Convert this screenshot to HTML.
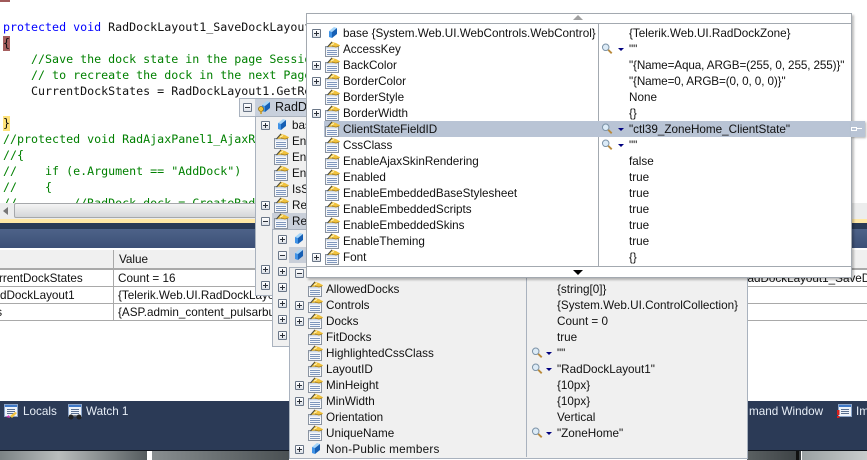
<!DOCTYPE html>
<html><head><meta charset="utf-8"><style>
html,body{margin:0;padding:0}
body{width:867px;height:460px;overflow:hidden;position:relative;background:#fff;font:11.7px "Liberation Sans",sans-serif;color:#111}
div,span,svg{position:absolute}
.c{font:11.65px/16px "DejaVu Sans Mono","Liberation Mono",monospace;white-space:pre;left:3px;color:#111}
.g{color:#008000}.b{color:#0000ff}
.t{white-space:nowrap;height:16px;line-height:16px;margin-top:1px}
.i{width:16px;height:16px;overflow:visible}
.e{width:7px;height:7px;margin:1px;border:1px solid #6a7687;background:linear-gradient(#fff,#dde1e7);border-radius:1px}
.e:before{content:"";position:absolute;left:1px;top:3px;width:5px;height:1px;background:#2a2f38}
.p:after{content:"";position:absolute;left:3px;top:1px;width:1px;height:5px;background:#2a2f38}
</style></head><body>
<svg width="0" height="0" style="position:absolute"><defs>
<symbol id="p" viewBox="0 0 16 16"><path d="M1.500 5.500h13v10h-13z" fill="#f6f8fb" stroke="#8a93a0"/><path d="M2 6h12v1.500H2z" fill="#cfd9e8"/><path d="M3 9.500h10M3 11.500h10M3 13.500h10" stroke="#7f97bd"/><path d="M4 6 L8 1 L12 2 L16.500 4.500 L12 6.500 L8 5.500z" fill="#f0c23e"/><path d="M3.500 6 L8 .8" stroke="#4b4a3c" stroke-width="1.100" fill="none"/><path d="M8 5 L12 6 L15 5" stroke="#a87f1c" stroke-width=".8" fill="none"/><path d="M7 4 L10 2.500" stroke="#fff3b8" fill="none"/></symbol>
<symbol id="m" viewBox="0 0 16 16"><path d="M2 6 L7 2 L10 3 L5 7z" fill="#a6d6fa"/><path d="M2 6 L5 7 V13 L2 12z" fill="#3f92e6"/><path d="M5 7 L10 3 V9 L5 13z" fill="#165fb4"/></symbol>
<symbol id="l" viewBox="0 0 14 14"><circle cx="5.500" cy="5" r="3.800" fill="#dcebf7" stroke="#7e94a8" stroke-width="1.200"/><path d="M8.500 8 L12.500 12" stroke="#b98a3a" stroke-width="2.200"/></symbol>
<symbol id="w" viewBox="0 0 16 16"><path d="M1.500 1.500h13v12h-13z" fill="#eef3fa" stroke="#8aa3c8"/><path d="M2 2h12v2H2z" fill="#3e78c8"/><path d="M4 6.500h8M4 8.500h8M4 10.500h8" stroke="#5a6f90"/></symbol>
</defs></svg>

<div style="left:0;top:0;width:10px;height:2px;background:#a05a5a"></div>
<div style="left:3px;top:36px;width:7px;height:15px;background:#a65f5f"></div>
<div style="left:3px;top:116px;width:7px;height:15px;background:#ffe27a"></div>
<div class="c" style="top:19px"><span style="position:static" class="b">protected void</span> RadDockLayout1_SaveDockLayout</div>
<div class="c" style="top:35px">{</div>
<div class="c g" style="top:51px">    //Save the dock state in the page Session</div>
<div class="c g" style="top:67px">    // to recreate the dock in the next Page</div>
<div class="c" style="top:83px">    CurrentDockStates = RadDockLayout1.GetRegistered</div>
<div class="c" style="top:115px">}</div>
<div class="c g" style="top:131px">//protected void RadAjaxPanel1_AjaxRequest</div>
<div class="c g" style="top:147px">//{</div>
<div class="c g" style="top:163px">//    if (e.Argument == "AddDock")</div>
<div class="c g" style="top:179px">//    {</div>
<div style="left:0;top:195px;width:867px;height:8px;overflow:hidden"><div class="c g" style="top:0">//        //RadDock dock = CreateRadDock</div></div>

<div style="left:0;top:203px;width:867px;height:16px;background:#eceded"></div>
<div style="left:14px;top:203px;width:260px;height:13px;background:linear-gradient(#f4f4f4,#d4d6d8);border:1px solid #a6a8ab;border-radius:2px"></div>
<div style="left:3px;top:207px;width:0;height:0;border:4px solid transparent;border-right:5px solid #777;border-left:0"></div>
<div style="left:0;top:219px;width:867px;height:4px;background:#ffe8a6"></div>
<div style="left:0;top:223px;width:867px;height:6px;background:#293a56"></div>
<div style="left:0;top:229px;width:867px;height:19px;background:linear-gradient(#4d6288,#3c5077)"></div>
<div style="left:0;top:248px;width:867px;height:153px;background:#fff"></div>

<div style="left:0;top:250px;width:867px;height:18px;background:#f0f0f0"></div>
<div style="left:0;top:268px;width:867px;height:2px;background:#a9a9a9"></div>
<div style="left:0;top:286px;width:867px;height:1px;background:#a9a9a9"></div>
<div style="left:0;top:303px;width:867px;height:1px;background:#a9a9a9"></div>
<div style="left:0;top:320px;width:867px;height:1px;background:#a9a9a9"></div>
<div style="left:113px;top:250px;width:1px;height:70px;background:#a9a9a9"></div>
<div class="t" style="left:119px;top:251px">Value</div>
<div class="t" style="left:-16px;top:270px">CurrentDockStates</div>
<div class="t" style="left:118px;top:270px">Count = 16</div>
<div class="t" style="left:-15px;top:287px">RadDockLayout1</div>
<div class="t" style="left:118px;top:287px">{Telerik.Web.UI.RadDockLayout}</div>
<div class="t" style="left:-7px;top:304px">ts</div>
<div class="t" style="left:118px;top:304px">{ASP.admin_content_pulsarbuilder}</div>
<div class="t" style="left:739px;top:270px;width:128px;overflow:hidden">RadDockLayout1_SaveDockLayout</div>

<div style="left:0;top:401px;width:867px;height:50px;background:#2b3a56"></div>
<svg class="i" style="left:3px;top:403px"><use href="#w"/></svg>
<svg class="i" style="left:3px;top:403px" viewBox="0 0 16 16"><path d="M3 14l3-2 1 3z" fill="#d63bb0"/><path d="M7 13l5-4 2 1-5 5z" fill="#f0c23e"/></svg>
<div class="t" style="left:23px;top:403px;color:#e6edf6">Locals</div>
<svg class="i" style="left:67px;top:403px"><use href="#w"/></svg>
<svg class="i" style="left:67px;top:403px" viewBox="0 0 16 16"><circle cx="4" cy="14" r="2.500" fill="#222"/><circle cx="12" cy="14" r="2.500" fill="#222"/><path d="M4 13h8" stroke="#222"/></svg>
<div class="t" style="left:86px;top:403px;color:#e6edf6">Watch 1</div>
<div class="t" style="left:749px;top:403px;color:#e6edf6">mand Window</div>
<svg class="i" style="left:837px;top:403px"><use href="#w"/></svg>
<svg class="i" style="left:837px;top:403px" viewBox="0 0 16 16"><path d="M0 7h2.500v5H0z" fill="#d8201c"/><path d="M0 13h2.500v2H0z" fill="#d8201c"/></svg>
<div class="t" style="left:856px;top:403px;color:#e6edf6">Im</div>
<div style="left:0;top:450px;width:867px;height:1px;background:#10141c"></div>
<div style="left:0;top:451px;width:147px;height:9px;background:linear-gradient(90deg,#7b8385,#b9bdbd 40%,#555c5f)"></div>
<div style="left:152px;top:451px;width:137px;height:9px;background:linear-gradient(90deg,#888e90,#4a5053)"></div>
<div style="left:747px;top:451px;width:54px;height:9px;background:linear-gradient(90deg,#5a6062,#3c4144)"></div>
<div style="left:796px;top:451px;width:3px;height:9px;background:#111"></div>
<div style="left:802px;top:451px;width:65px;height:9px;background:linear-gradient(90deg,#9aa1a3,#c9cccc)"></div>

<!-- popup 1 -->
<div style="left:239px;top:98px;width:70px;height:19px;background:#c8d0dc;border:1px solid #a9b2be;box-sizing:border-box"></div>
<div style="left:239px;top:98px;width:16px;height:19px;background:#eef0f2;border:1px solid #a9b2be;border-right:0;box-sizing:border-box"></div>
<div class="e" style="left:242px;top:102px"></div>
<svg class="i" style="left:260px;top:99px"><use href="#m"/></svg>
<svg class="i" style="left:257px;top:99px" viewBox="0 0 16 16"><circle cx="4" cy="10" r="2.500" fill="#f0c23e" stroke="#8a6a10" stroke-width=".7"/><path d="M4 12v3" stroke="#c89a20" stroke-width="1.500"/></svg>
<div class="t" style="left:275px;top:99px;font-size:12.500px;margin-top:0">RadDock</div>

<!-- popup 2 -->
<div style="left:255px;top:116px;width:60px;height:180px;background:#f0f0f0;border:1px solid #a9b2be;box-sizing:border-box"></div>
<div style="left:272px;top:213px;width:40px;height:16px;background:#c9cfd9"></div>
<div class="e p" style="left:260px;top:120px"></div>
<svg class="i" style="left:276px;top:117px"><use href="#m"/></svg><div class="t" style="left:292px;top:117px">base</div>
<svg class="i" style="left:273px;top:133px"><use href="#p"/></svg><div class="t" style="left:292px;top:133px">Enabled</div>
<svg class="i" style="left:273px;top:149px"><use href="#p"/></svg><div class="t" style="left:292px;top:149px">Enabled</div>
<svg class="i" style="left:273px;top:165px"><use href="#p"/></svg><div class="t" style="left:292px;top:165px">Enabled</div>
<svg class="i" style="left:273px;top:181px"><use href="#p"/></svg><div class="t" style="left:292px;top:181px">IsSaved</div>
<div class="e p" style="left:260px;top:200px"></div><svg class="i" style="left:273px;top:197px"><use href="#p"/></svg><div class="t" style="left:292px;top:197px">Register</div>
<div class="e" style="left:260px;top:216px"></div><svg class="i" style="left:273px;top:213px"><use href="#p"/></svg><div class="t" style="left:292px;top:213px">Registered</div>
<div class="e p" style="left:260px;top:264px"></div>
<div class="e p" style="left:260px;top:280px"></div>

<!-- popup 3 -->
<div style="left:272px;top:229px;width:40px;height:118px;background:#f0f0f0;border:1px solid #a9b2be;box-sizing:border-box"></div>
<div style="left:289px;top:247px;width:20px;height:16px;background:#c9cfd9"></div>
<div class="e p" style="left:277px;top:234px"></div><svg class="i" style="left:293px;top:231px"><use href="#m"/></svg>
<div class="e" style="left:277px;top:250px"></div><svg class="i" style="left:293px;top:247px"><use href="#m"/></svg>
<div class="e p" style="left:277px;top:266px"></div>
<div class="e p" style="left:277px;top:282px"></div>
<div class="e p" style="left:277px;top:298px"></div>
<div class="e p" style="left:277px;top:314px"></div>
<div class="e p" style="left:277px;top:330px"></div>

<!-- popup 4 -->
<div style="left:289px;top:267px;width:459px;height:192px;background:#f0f0f0;border:1px solid #a9b2be;box-sizing:border-box"></div>
<div style="left:526px;top:276px;width:1px;height:181px;background:#a9b2be"></div>
<div class="e" style="left:294px;top:268px"></div>
<svg class="i" style="left:307px;top:281px"><use href="#p"/></svg><div class="t" style="left:326px;top:281px">AllowedDocks</div><div class="t" style="left:557px;top:281px">{string[0]}</div>
<div class="e p" style="left:294px;top:300px"></div><svg class="i" style="left:307px;top:297px"><use href="#p"/></svg><div class="t" style="left:326px;top:297px">Controls</div><div class="t" style="left:557px;top:297px">{System.Web.UI.ControlCollection}</div>
<div class="e p" style="left:294px;top:316px"></div><svg class="i" style="left:307px;top:313px"><use href="#p"/></svg><div class="t" style="left:326px;top:313px">Docks</div><div class="t" style="left:557px;top:313px">Count = 0</div>
<svg class="i" style="left:307px;top:329px"><use href="#p"/></svg><div class="t" style="left:326px;top:329px">FitDocks</div><div class="t" style="left:557px;top:329px">true</div>
<svg class="i" style="left:307px;top:345px"><use href="#p"/></svg><div class="t" style="left:326px;top:345px">HighlightedCssClass</div><svg class="i" style="left:531px;top:347px;width:12px;height:12px"><use href="#l"/></svg><div style="left:546px;top:352px;border:3px solid transparent;border-top:3px solid #000080;border-bottom:0"></div><div class="t" style="left:557px;top:345px">""</div>
<svg class="i" style="left:307px;top:361px"><use href="#p"/></svg><div class="t" style="left:326px;top:361px">LayoutID</div><svg class="i" style="left:531px;top:363px;width:12px;height:12px"><use href="#l"/></svg><div style="left:546px;top:368px;border:3px solid transparent;border-top:3px solid #000080;border-bottom:0"></div><div class="t" style="left:557px;top:361px">"RadDockLayout1"</div>
<div class="e p" style="left:294px;top:380px"></div><svg class="i" style="left:307px;top:377px"><use href="#p"/></svg><div class="t" style="left:326px;top:377px">MinHeight</div><div class="t" style="left:557px;top:377px">{10px}</div>
<div class="e p" style="left:294px;top:396px"></div><svg class="i" style="left:307px;top:393px"><use href="#p"/></svg><div class="t" style="left:326px;top:393px">MinWidth</div><div class="t" style="left:557px;top:393px">{10px}</div>
<svg class="i" style="left:307px;top:409px"><use href="#p"/></svg><div class="t" style="left:326px;top:409px">Orientation</div><div class="t" style="left:557px;top:409px">Vertical</div>
<svg class="i" style="left:307px;top:425px"><use href="#p"/></svg><div class="t" style="left:326px;top:425px">UniqueName</div><svg class="i" style="left:531px;top:427px;width:12px;height:12px"><use href="#l"/></svg><div style="left:546px;top:432px;border:3px solid transparent;border-top:3px solid #000080;border-bottom:0"></div><div class="t" style="left:557px;top:425px">"ZoneHome"</div>
<div class="e p" style="left:294px;top:444px"></div><svg class="i" style="left:310px;top:441px"><use href="#m"/></svg><div class="t" style="left:326px;top:441px;letter-spacing:.25px">Non-Public members</div>

<!-- top popup -->
<div style="left:306px;top:13px;width:546px;height:265px;background:#fff;border:1px solid #a3a9b0;box-sizing:border-box;box-shadow:2px 2px 2px rgba(0,0,0,.25)"></div>
<div style="left:307px;top:23px;width:544px;height:1px;background:#a3a9b0"></div>
<div style="left:307px;top:266px;width:544px;height:1px;background:#a3a9b0"></div>
<div style="left:573px;top:15px;border:5px solid transparent;border-bottom:5px solid #a0a0a0;border-top:0"></div>
<div style="left:573px;top:270px;border:5px solid transparent;border-top:5px solid #000;border-bottom:0"></div>
<div style="left:598px;top:24px;width:1px;height:242px;background:#a3a9b0"></div>
<div style="left:324px;top:121px;width:541px;height:16px;background:#b9c4d5"></div>
<div style="left:851px;top:121px;width:14px;height:16px;background:#b9c4d5;box-shadow:1px 1px 2px rgba(0,0,0,.3)"></div>
<div style="left:851px;top:127px;width:6px;height:4px;border:1px solid #fff;box-sizing:border-box"></div><div style="left:857px;top:128px;width:5px;height:1px;background:#fff"></div>

<div class="e p" style="left:311px;top:28px"></div><svg class="i" style="left:327px;top:25px"><use href="#m"/></svg><div class="t" style="left:343px;top:25px">base {System.Web.UI.WebControls.WebControl}</div><div class="t" style="left:629px;top:25px">{Telerik.Web.UI.RadDockZone}</div>
<svg class="i" style="left:324px;top:41px"><use href="#p"/></svg><div class="t" style="left:343px;top:41px">AccessKey</div><svg class="i" style="left:601px;top:43px;width:12px;height:12px"><use href="#l"/></svg><div style="left:618px;top:48px;border:3px solid transparent;border-top:3px solid #000080;border-bottom:0"></div><div class="t" style="left:629px;top:41px">""</div>
<div class="e p" style="left:311px;top:60px"></div><svg class="i" style="left:324px;top:57px"><use href="#p"/></svg><div class="t" style="left:343px;top:57px">BackColor</div><div class="t" style="left:629px;top:57px;letter-spacing:-.11px">"{Name=Aqua, ARGB=(255, 0, 255, 255)}"</div>
<div class="e p" style="left:311px;top:76px"></div><svg class="i" style="left:324px;top:73px"><use href="#p"/></svg><div class="t" style="left:343px;top:73px">BorderColor</div><div class="t" style="left:629px;top:73px;letter-spacing:-.11px">"{Name=0, ARGB=(0, 0, 0, 0)}"</div>
<svg class="i" style="left:324px;top:89px"><use href="#p"/></svg><div class="t" style="left:343px;top:89px">BorderStyle</div><div class="t" style="left:629px;top:89px">None</div>
<div class="e p" style="left:311px;top:108px"></div><svg class="i" style="left:324px;top:105px"><use href="#p"/></svg><div class="t" style="left:343px;top:105px">BorderWidth</div><div class="t" style="left:629px;top:105px">{}</div>
<svg class="i" style="left:324px;top:121px"><use href="#p"/></svg><div class="t" style="left:343px;top:121px">ClientStateFieldID</div><svg class="i" style="left:601px;top:123px;width:12px;height:12px"><use href="#l"/></svg><div style="left:618px;top:128px;border:3px solid transparent;border-top:3px solid #000080;border-bottom:0"></div><div class="t" style="left:629px;top:121px">"ctl39_ZoneHome_ClientState"</div>
<svg class="i" style="left:324px;top:137px"><use href="#p"/></svg><div class="t" style="left:343px;top:137px">CssClass</div><svg class="i" style="left:601px;top:139px;width:12px;height:12px"><use href="#l"/></svg><div style="left:618px;top:144px;border:3px solid transparent;border-top:3px solid #000080;border-bottom:0"></div><div class="t" style="left:629px;top:137px">""</div>
<svg class="i" style="left:324px;top:153px"><use href="#p"/></svg><div class="t" style="left:343px;top:153px">EnableAjaxSkinRendering</div><div class="t" style="left:629px;top:153px">false</div>
<svg class="i" style="left:324px;top:169px"><use href="#p"/></svg><div class="t" style="left:343px;top:169px">Enabled</div><div class="t" style="left:629px;top:169px">true</div>
<svg class="i" style="left:324px;top:185px"><use href="#p"/></svg><div class="t" style="left:343px;top:185px">EnableEmbeddedBaseStylesheet</div><div class="t" style="left:629px;top:185px">true</div>
<svg class="i" style="left:324px;top:201px"><use href="#p"/></svg><div class="t" style="left:343px;top:201px">EnableEmbeddedScripts</div><div class="t" style="left:629px;top:201px">true</div>
<svg class="i" style="left:324px;top:217px"><use href="#p"/></svg><div class="t" style="left:343px;top:217px">EnableEmbeddedSkins</div><div class="t" style="left:629px;top:217px">true</div>
<svg class="i" style="left:324px;top:233px"><use href="#p"/></svg><div class="t" style="left:343px;top:233px">EnableTheming</div><div class="t" style="left:629px;top:233px">true</div>
<div class="e p" style="left:311px;top:252px"></div><svg class="i" style="left:324px;top:249px"><use href="#p"/></svg><div class="t" style="left:343px;top:249px">Font</div><div class="t" style="left:629px;top:249px">{}</div>
</body></html>
